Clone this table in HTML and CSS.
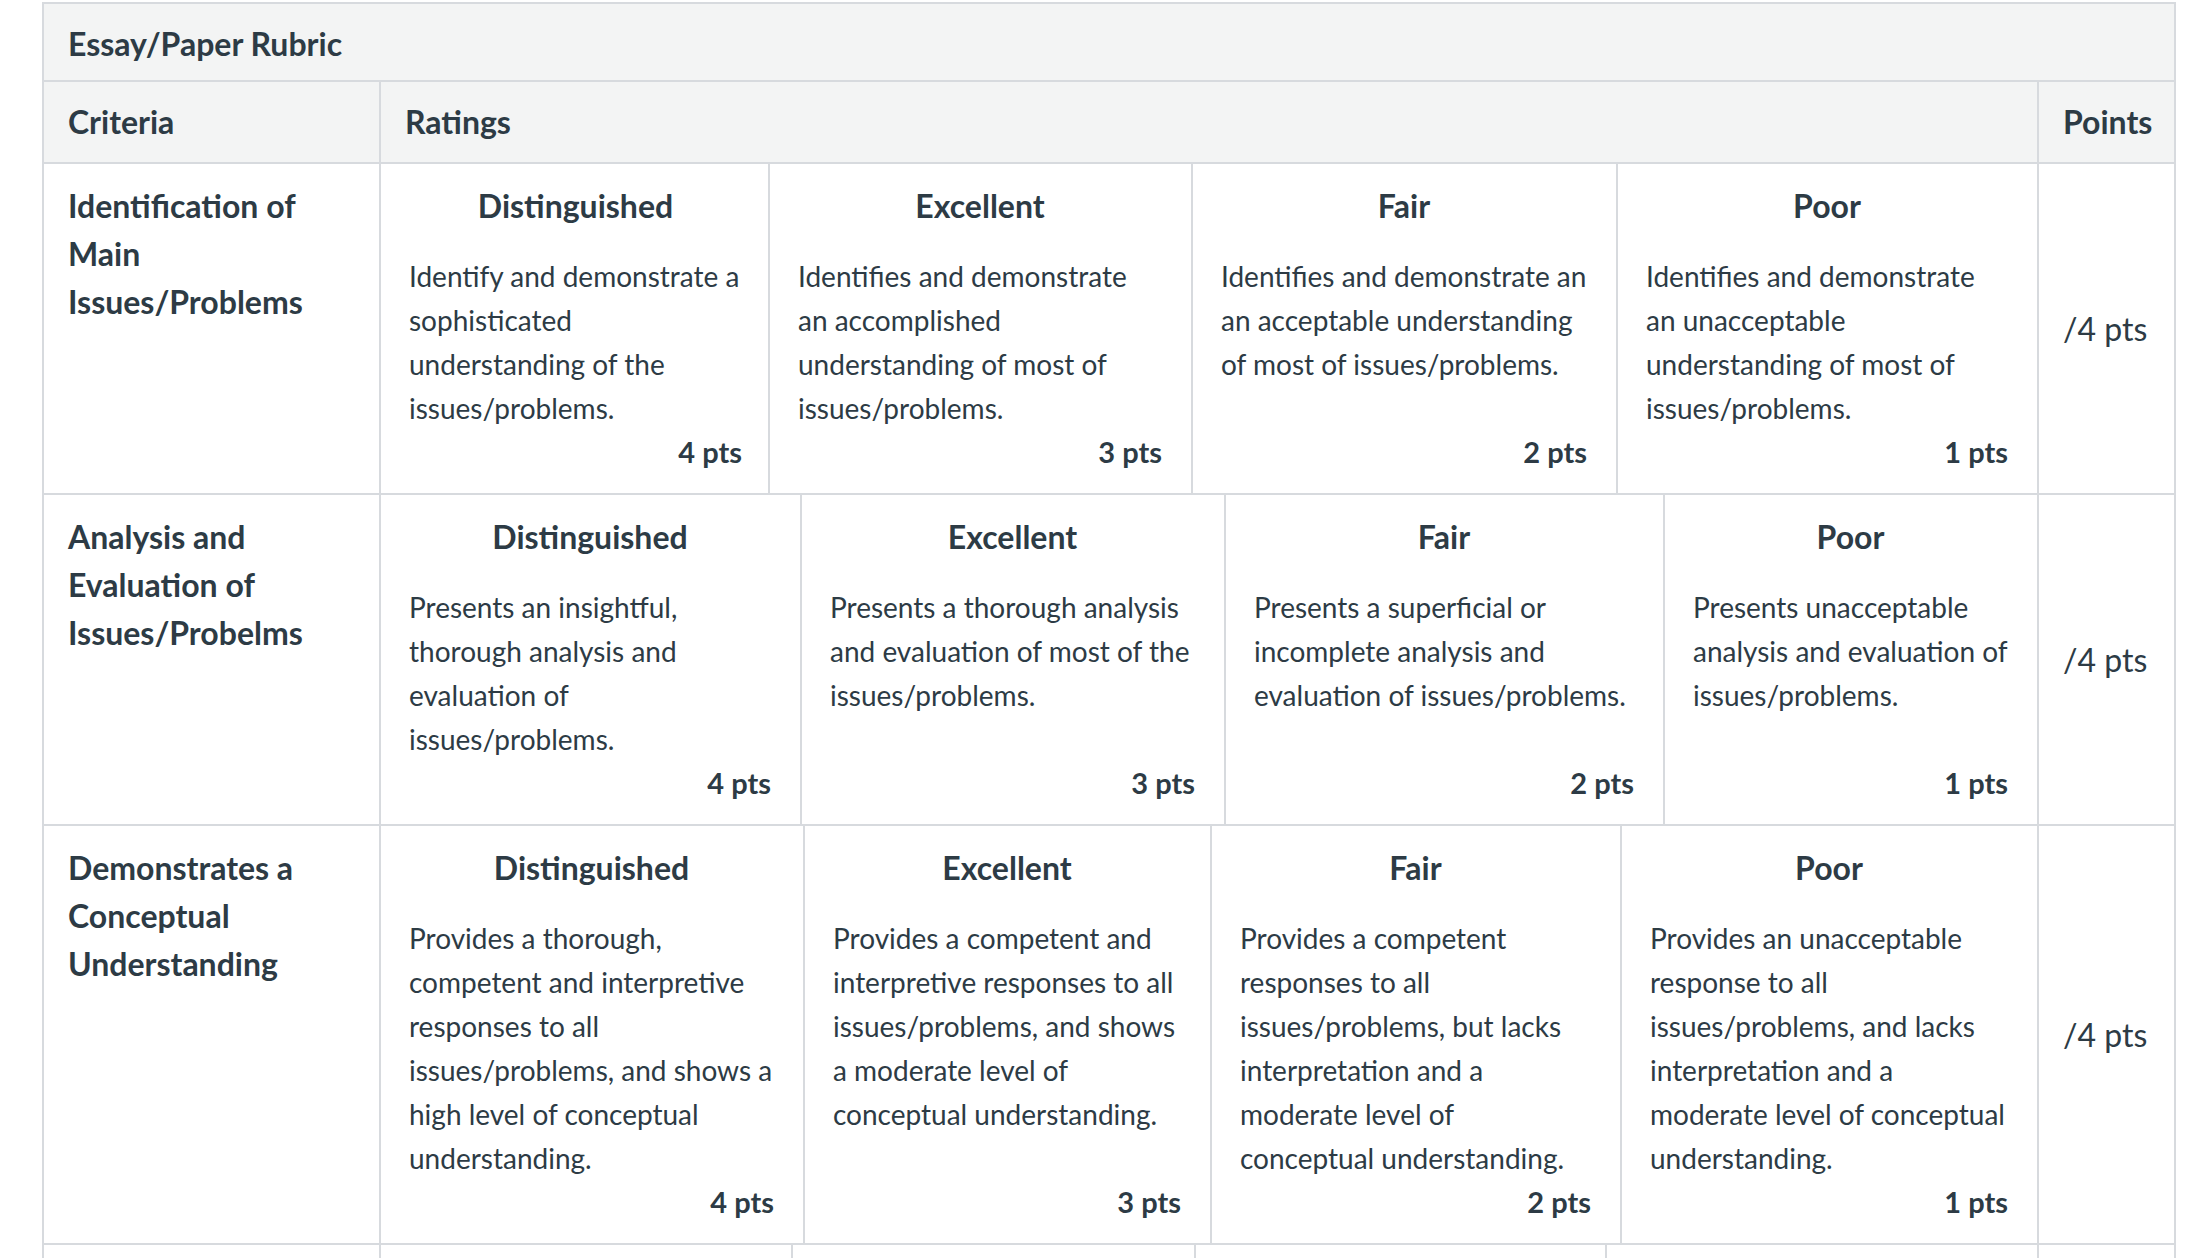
FILE: index.html
```html
<!DOCTYPE html>
<html lang="en">
<head>
<meta charset="utf-8">
<title>Essay/Paper Rubric</title>
<link rel="stylesheet" href="styles.css">
</head>
<body>
<div class="rubric">
  <div class="rubric-title">Essay/Paper Rubric</div>
  <div class="row head">
    <div class="c-criteria">Criteria</div>
    <div class="c-ratings">Ratings</div>
    <div class="c-points">Points</div>
  </div>

  <div class="row">
    <div class="c-criteria crit-name">Identification of Main Issues/Problems</div>
    <div class="c-ratings tiers tiers-1">
      <div class="tier">
        <div class="tier-title">Distinguished</div>
        <div class="tier-desc">Identify and demonstrate a sophisticated understanding of the issues/problems.</div>
        <div class="tier-pts">4 pts</div>
      </div>
      <div class="tier">
        <div class="tier-title">Excellent</div>
        <div class="tier-desc">Identifies and demonstrate an accomplished understanding of most of issues/problems.</div>
        <div class="tier-pts">3 pts</div>
      </div>
      <div class="tier">
        <div class="tier-title">Fair</div>
        <div class="tier-desc">Identifies and demonstrate an an acceptable understanding of most of issues/problems.</div>
        <div class="tier-pts">2 pts</div>
      </div>
      <div class="tier">
        <div class="tier-title">Poor</div>
        <div class="tier-desc">Identifies and demonstrate an unacceptable understanding of most of issues/problems.</div>
        <div class="tier-pts">1 pts</div>
      </div>
    </div>
    <div class="c-points pts-cell">/4 pts</div>
  </div>

  <div class="row">
    <div class="c-criteria crit-name">Analysis and Evaluation of Issues/Probelms</div>
    <div class="c-ratings tiers tiers-2">
      <div class="tier">
        <div class="tier-title">Distinguished</div>
        <div class="tier-desc">Presents an insightful, thorough analysis and evaluation of issues/problems.</div>
        <div class="tier-pts">4 pts</div>
      </div>
      <div class="tier">
        <div class="tier-title">Excellent</div>
        <div class="tier-desc">Presents a thorough analysis and evaluation of most of the issues/problems.</div>
        <div class="tier-pts">3 pts</div>
      </div>
      <div class="tier">
        <div class="tier-title">Fair</div>
        <div class="tier-desc">Presents a superficial or incomplete analysis and evaluation of issues/problems.</div>
        <div class="tier-pts">2 pts</div>
      </div>
      <div class="tier">
        <div class="tier-title">Poor</div>
        <div class="tier-desc">Presents unacceptable analysis and evaluation of issues/problems.</div>
        <div class="tier-pts">1 pts</div>
      </div>
    </div>
    <div class="c-points pts-cell">/4 pts</div>
  </div>

  <div class="row">
    <div class="c-criteria crit-name">Demonstrates a Conceptual Understanding</div>
    <div class="c-ratings tiers tiers-3">
      <div class="tier">
        <div class="tier-title">Distinguished</div>
        <div class="tier-desc">Provides a thorough, competent and interpretive responses to all issues/problems, and shows a high level of conceptual understanding.</div>
        <div class="tier-pts">4 pts</div>
      </div>
      <div class="tier">
        <div class="tier-title">Excellent</div>
        <div class="tier-desc">Provides a competent and interpretive responses to all issues/problems, and shows a moderate level of conceptual understanding.</div>
        <div class="tier-pts">3 pts</div>
      </div>
      <div class="tier">
        <div class="tier-title">Fair</div>
        <div class="tier-desc">Provides a competent responses to all issues/problems, but lacks interpretation and a moderate level of conceptual understanding.</div>
        <div class="tier-pts">2 pts</div>
      </div>
      <div class="tier">
        <div class="tier-title">Poor</div>
        <div class="tier-desc">Provides an unacceptable response to all issues/problems, and lacks interpretation and a moderate level of conceptual understanding.</div>
        <div class="tier-pts">1 pts</div>
      </div>
    </div>
    <div class="c-points pts-cell">/4 pts</div>
  </div>

  <div class="row">
    <div class="c-criteria crit-name">Writing Mechanics</div>
    <div class="c-ratings tiers tiers-4">
      <div class="tier">
        <div class="tier-title">Distinguished</div>
        <div class="tier-desc">Writing is free of errors in grammar, spelling and punctuation.</div>
        <div class="tier-pts">4 pts</div>
      </div>
      <div class="tier">
        <div class="tier-title">Excellent</div>
        <div class="tier-desc">Writing has few errors in grammar, spelling and punctuation.</div>
        <div class="tier-pts">3 pts</div>
      </div>
      <div class="tier">
        <div class="tier-title">Fair</div>
        <div class="tier-desc">Writing has some errors in grammar, spelling and punctuation.</div>
        <div class="tier-pts">2 pts</div>
      </div>
      <div class="tier">
        <div class="tier-title">Poor</div>
        <div class="tier-desc">Writing has many errors in grammar, spelling and punctuation.</div>
        <div class="tier-pts">1 pts</div>
      </div>
    </div>
    <div class="c-points pts-cell">/4 pts</div>
  </div>
</div>
</body>
</html>
```

FILE: styles.css
```css
* {
  box-sizing: border-box;
}

body {
  margin: 0;
  background: #ffffff;
  color: #2d3b45;
  font-family: Lato, "Noto Sans", "Liberation Sans", sans-serif;
}

.rubric {
  margin: 2px 0 0 42px;
  width: 2134px;
  border: 2px solid #d7dade;
}

.rubric-title {
  background: #f3f4f4;
  font-size: 32px;
  font-weight: 700;
  line-height: 48px;
  padding: 16px 24px 12px;
  border-bottom: 2px solid #d7dade;
}

.row {
  display: grid;
  grid-template-columns: 335px 1658px 137px;
  border-bottom: 2px solid #d7dade;
}

.row.head {
  background: #f3f4f4;
}

.head > div {
  padding: 16px 24px;
  font-size: 32px;
  font-weight: 700;
  line-height: 48px;
}

.c-ratings,
.c-points {
  border-left: 2px solid #d7dade;
}

.crit-name {
  padding: 18px 24px;
  font-size: 32px;
  font-weight: 700;
  line-height: 48px;
}

.tiers {
  display: grid;
}

.tiers-1 { grid-template-columns: 387px 423px 425px 1fr; }
.tiers-2 { grid-template-columns: 419px 424px 439px 1fr; }
.tiers-3 { grid-template-columns: 422px 407px 410px 1fr; }
.tiers-4 { grid-template-columns: 410px 403px 411px 1fr; }

.tier {
  display: flex;
  flex-direction: column;
  padding: 18px 29px 19px 28px;
}

.tiers-1 .tier:first-child {
  padding-right: 26px;
}

.tier + .tier {
  border-left: 2px solid #d7dade;
}

.tier-title {
  text-align: center;
  font-size: 32px;
  font-weight: 700;
  line-height: 48px;
}

.tier-desc {
  flex: 1;
  margin-top: 24px;
  font-size: 28px;
  line-height: 44px;
}

.tier-pts {
  text-align: right;
  font-size: 29px;
  font-weight: 700;
  line-height: 44px;
}

.pts-cell {
  display: flex;
  align-items: center;
  padding: 0 24px;
  font-size: 32px;
}
```
